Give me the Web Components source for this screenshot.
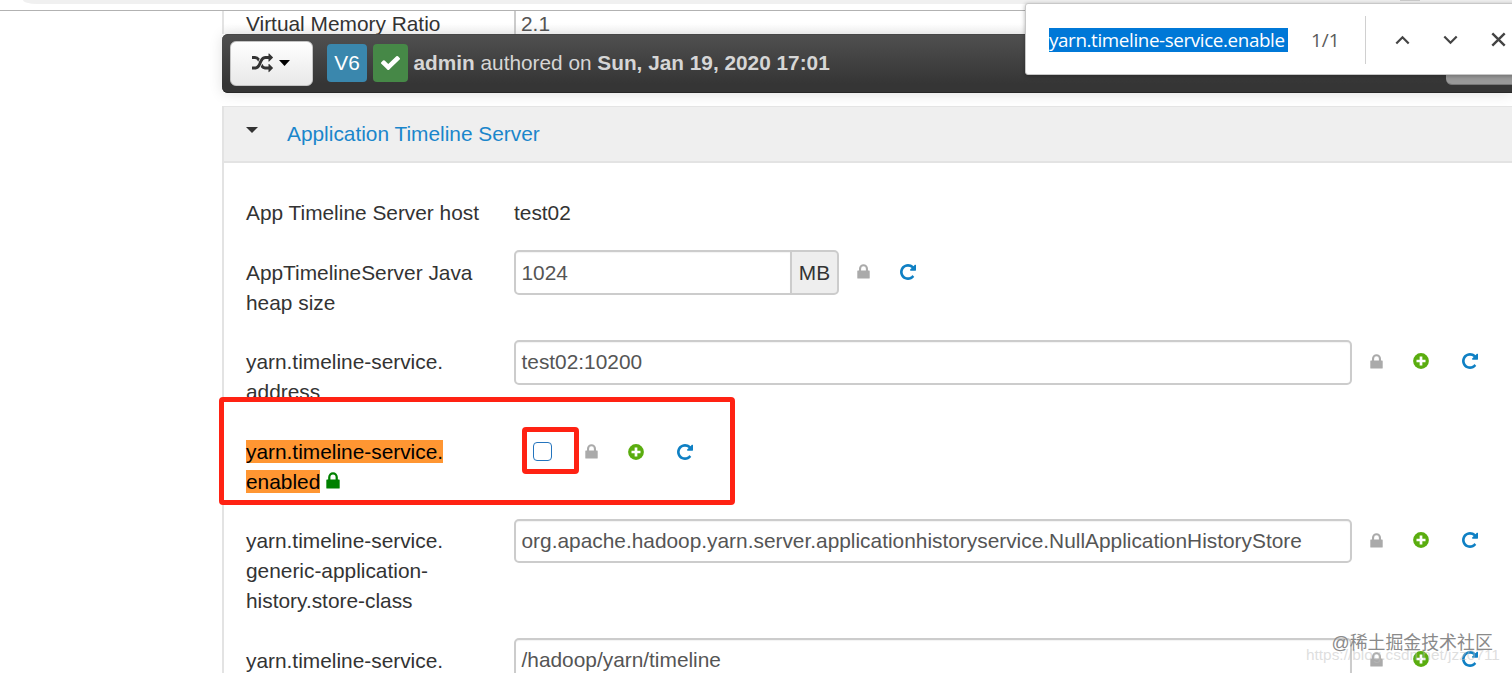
<!DOCTYPE html>
<html lang="en">
<head>
<meta charset="UTF-8">
<title>YARN Configs</title>
<style>
    body {
        margin: 0;
        width: 1512px;
        height: 673px;
        overflow: hidden;
        position: relative;
        background: #fff;
        color: #333;
        font: 20.87px/29.83px "Liberation Sans", Arial, sans-serif;
    }
    mark {
        background: #ff9632;
        color: #000;
    }
    .big {
        left: 218.5px;
        top: 397.3px;
        width: 516.5px;
        height: 107.5px;
    }
    .small {
        left: 522px;
        top: 427px;
        width: 57px;
        height: 47.3px;
    }
</style>
</head>
<body>
<browser-edge></browser-edge>
<config-peek value="2.1">Virtual Memory Ratio</config-peek>
<version-bar version="V6"><b>admin</b> authored on <b>Sun, Jan 19, 2020 17:01</b></version-bar>
<config-section>
    <span slot="title">Application Timeline Server</span>
    <config-row type="text" value="test02">App Timeline Server host</config-row>
    <config-row type="short" value="1024" unit="MB" icons="lock undo">AppTimelineServer Java<br>heap size</config-row>
    <config-row type="input" value="test02:10200" icons="lock plus undo">yarn.timeline-service.<br>address</config-row>
    <config-row type="check" icons="lock plus undo"><mark>yarn.timeline-service.</mark><br><mark>enabled</mark> <ui-icon name="lock" style="color:#008000;--w:14px;--h:17px"></ui-icon></config-row>
    <config-row type="input" value="org.apache.hadoop.yarn.server.applicationhistoryservice.NullApplicationHistoryStore" icons="lock plus undo">yarn.timeline-service.<br>generic-application-<br>history.store-class</config-row>
    <config-row type="input" value="/hadoop/yarn/timeline" icons="lock plus undo">yarn.timeline-service.</config-row>
</config-section>
<find-bar count="1/1">yarn.timeline-service.enable</find-bar>
<red-box class="big"></red-box>
<red-box class="small"></red-box>
<water-mark><span slot="url">https://blog.csdn.net/jzz0711</span>@稀土掘金技术社区</water-mark>

<script>
const ICONS = {
    lock: ['0 0 13 15', '<path fill="currentColor" fill-rule="evenodd" d="M.9 6.6H2V4.7a4.5 4.5 0 0 1 9 0v1.9h1.100q.6 0 .6.6v6.900q0 .5-.6.5H.9q-.6 0-.6-.5V7.200q0-.6.6-.6zM4.100 6.600h4.800V4.700a2.400 2.400 0 0 0-4.800 0z"/>'],
    plus: ['0 0 16 16', '<circle cx="8" cy="8" r="7.900" fill="currentColor"/><path stroke="#fff" stroke-width="2.700" d="M8 3.500v9M3.500 8h9"/>'],
    undo: ['128 128 1536 1536', '<path fill="currentColor" d="M1664 256v448q0 26-19 45t-45 19h-448q-42 0-59-40-17-39 14-69l138-138q-148-137-349-137-104 0-198.500 40.500t-163.500 109.500-109.500 163.500-40.500 198.500 40.500 198.500 109.500 163.500 163.500 109.500 198.500 40.500q119 0 225-52t179-147q7-10 23-12 15 0 25 9l137 138q9 8 9.500 20.500t-7.500 22.500q-109 132-264 204.500t-327 72.500q-156 0-298-61t-245-164-164-245-61-298 61-298 164-245 245-164 298-61q147 0 284.500 55.500t244.500 156.500l130-129q29-31 70-14 39 17 39 59z"/>'],
    random: ['0 0 1792 1792', '<path fill="currentColor" d="M666 481q-60 92-137 273-22-45-37-72.500t-40.500-63.500-51-56.500-63-35-81.500-14.500h-224q-14 0-23-9t-9-23v-192q0-14 9-23t23-9h224q250 0 410 225zm1126 799q0 14-9 23l-320 320q-9 9-23 9-13 0-22.500-9.500t-9.500-22.500v-192q-32 0-85 .5t-81 1-73-1-71-5-64-10.500-63-18.500-58-28.500-59-40-55-53.500-56-69.500q59-93 136-273 22 45 37 72.500t40.500 63.500 51 56.500 63 35 81.500 14.500h256v-192q0-14 9-23t23-9q12 0 24 10l319 319q9 9 9 23zm0-896q0 14-9 23l-320 320q-9 9-23 9-13 0-22.500-9.500t-9.500-22.500v-192h-256q-48 0-87 15t-69 45-51 61.500-45 77.500q-32 62-78 171-29 66-49.500 111t-54 105-64 100-74 83-90 68.500-106.500 42-128 16.500h-224q-14 0-23-9t-9-23v-192q0-14 9-23t23-9h224q48 0 87-15t69-45 51-61.500 45-77.500q32-62 78-171 29-66 49.500-111t54-105 64-100 74-83 90-68.500 106.500-42 128-16.500h256v-192q0-14 9-23t23-9q12 0 24 10l319 319q9 9 9 23z"/>'],
    check: ['121 334 1550 1188', '<path fill="currentColor" d="M1671 566q0 40-28 68l-724 724-136 136q-28 28-68 28t-68-28l-136-136-362-362q-28-28-28-68t28-68l136-136q28-28 68-28t68 28l294 295 656-657q28-28 68-28t68 28l136 136q28 28 28 68z"/>'],
    up: ['0 0 15 10', '<path fill="none" stroke="currentColor" stroke-width="2.200" d="M1.300 8.500 7.500 2.300l6.200 6.200"/>'],
    down: ['0 0 15 10', '<path fill="none" stroke="currentColor" stroke-width="2.200" d="M1.300 1.500 7.500 7.700l6.200-6.200"/>'],
    close: ['0 0 15 15', '<path fill="none" stroke="currentColor" stroke-width="2.400" d="M1.300 1.300l12.400 12.400M13.700 1.300 1.300 13.700"/>'],
    caret: ['0 0 12 6', '<path fill="currentColor" d="M0 0h12L6 6z"/>']
};

class Base extends HTMLElement{
    constructor(){
        super();
        this.attachShadow({mode: "open"});
    }
    connectedCallback(){
        const template = document.createElement("template");
        template.innerHTML = `<style>${this.getStyle()}</style>${this.getTemplate()}`;
        this.shadowRoot.replaceChildren(template.content.cloneNode(true));
    }
    getTemplate(){
        return "";
    }
}

class UiIcon extends Base{
    getStyle(){
        return `
        :host { display: inline-block; width: var(--w, 16px); height: var(--h, 16px); line-height: 0; flex: none; }
        svg { display: block; width: 100%; height: 100%; }`;
    }
    getTemplate(){
        const [box, shape] = ICONS[this.getAttribute("name")];
        return `<svg viewBox="${box}" preserveAspectRatio="none">${shape}</svg>`;
    }
}

class BrowserEdge extends Base{
    getStyle(){
        return `
        :host { display: flex; justify-content: flex-end; box-sizing: border-box; height: 11px; border-bottom: 1px solid #b2b2b2; }
        div { width: 1489px; height: 4px; background: #f0f0f0; border-bottom-left-radius: 14px 4px; box-sizing: border-box; padding-left: 1377px; }
        i { display: block; width: 20px; height: 1px; background: #ccc; }`;
    }
    getTemplate(){
        return `<div><i></i></div>`;
    }
}

class ConfigPeek extends Base{
    getStyle(){
        return `
        :host { display: flex; height: 23px; margin-left: 222px; border-left: 2px solid #e3e3e3; overflow: hidden; background: linear-gradient(#fff 55%, #f6f6f6); }
        span { width: 290px; padding-left: 22px; box-sizing: border-box; margin-top: -2px; }
        div { flex: 1; border-left: 2px solid #ccc; padding-left: 5px; color: #555; }
        p { margin: -2px 0 0; }`;
    }
    getTemplate(){
        return `<span><slot></slot></span><div><p>${this.getAttribute("value")}</p></div>`;
    }
}

class VersionBar extends Base{
    getStyle(){
        return `
        :host { display: flex; align-items: center; box-sizing: border-box; height: 59px; margin-left: 222px; padding: 0 0 1px 8px;
            border-radius: 6px 0 0 6px; background: linear-gradient(#505050, #353535 85%); color: #d6d6d6; font-size: 20.800px;
            box-shadow: 0 1px 14px rgba(0, 0, 0, .12), inset 0 -1px #282828, inset 0 1px #474747; position: relative; }
        .menu { display: flex; align-items: center; gap: 6px; box-sizing: border-box; width: 83px; height: 45px; padding-left: 20.500px; margin-right: 14px;
            border: 1.5px solid #c4c4c4; border-radius: 6px; background: linear-gradient(#fff, #e8e8e8); color: #333; }
        .tag { display: flex; align-items: center; justify-content: center; height: 38px; border-radius: 4px; color: #fff; }
        .v { width: 40px; background: #3a87ad; margin-right: 6px; }
        .ok { width: 35px; background: #468847; margin-right: 5.500px; }
        .grey { align-self: flex-end; width: 66px; height: 12px; margin: 0 0 7px auto; border-radius: 0 0 0 6px; background: #999; border-bottom: 1px solid #777; }`;
    }
    getTemplate(){
        return `
        <div class="menu"><ui-icon name="random" style="--w:21px;--h:21px"></ui-icon><ui-icon name="caret" style="color:#000;--w:11px;--h:6px"></ui-icon></div>
        <div class="tag v">${this.getAttribute("version")}</div>
        <div class="tag ok"><ui-icon name="check" style="--w:19px;--h:14px"></ui-icon></div>
        <div><slot></slot></div>
        <div class="grey"></div>`;
    }
}

class ConfigSection extends Base{
    getStyle(){
        return `
        :host { display: block; margin: 13px 0 0 222px; border-left: 2px solid #e3e3e3; }
        header { display: flex; align-items: center; box-sizing: border-box; height: 57px; padding-left: 22px; gap: 29px;
            background: #efefef; border-top: 1px solid #e4e4e4; border-bottom: 2px solid #e3e3e3; color: #1a86cb; }
        header ui-icon { color: #333; --w: 12px; --h: 6px; margin-bottom: 8px; }
        main { padding: 27.800px 0 0 22px; }`;
    }
    getTemplate(){
        return `<header><ui-icon name="caret"></ui-icon><slot name="title"></slot></header><main><slot></slot></main>`;
    }
}

class ConfigRow extends Base{
    getStyle(){
        return `
        :host { display: flex; align-items: flex-start; margin-bottom: 22.300px; }
        .label { width: 268px; padding-top: 7.500px; white-space: nowrap; flex: none; }
        .text { padding-top: 7.500px; }
        .input { display: flex; align-items: center; box-sizing: border-box; width: 838px; height: 44.700px; padding-left: 5.500px;
            border: 2px solid #ccc; border-radius: 5px; color: #555; margin-bottom: -8px; box-shadow: inset 0 1px 1px rgba(0, 0, 0, .05); }
        .short { width: 278px; border-radius: 5px 0 0 5px; }
        .unit { display: flex; align-items: center; justify-content: center; box-sizing: border-box; width: 49px; height: 44.700px; margin-left: -2px;
            border: 2px solid #ccc; border-radius: 0 5px 5px 0; background: #eee; }
        .check { box-sizing: border-box; width: 19px; height: 19px; margin: 13px 15.500px 0 18.500px; border: 1.800px solid #2474bd; border-radius: 4px; }
        .icons { display: flex; align-items: center; height: 42.500px; margin-left: 18px; }
        .check + .icons { height: 45px; }
        .lock { --w: 13px; --h: 15px; color: #aaa; }
        .plus { color: #5aad0f; margin-left: 30px; }
        .undo { color: #0f80c4; margin-left: 33px; }
        .lock + .undo { margin-left: 30px; }`;
    }
    getTemplate(){
        const type = this.getAttribute("type");
        const value = this.getAttribute("value");
        const unit = this.getAttribute("unit");
        const names = (this.getAttribute("icons") || "").split(" ").filter(Boolean);
        let field = `<div class="input ${type}">${value}</div>`;
        if(type === "text") field = `<div class="text">${value}</div>`;
        if(type === "check") field = `<div class="check"></div>`;
        const icons = names.map(n => `<ui-icon class="${n}" name="${n}"></ui-icon>`).join("");
        return `
        <div class="label"><slot></slot></div>
        ${field}${unit ? `<div class="unit">${unit}</div>` : ""}
        ${icons ? `<div class="icons">${icons}</div>` : ""}`;
    }
}

class FindBar extends Base{
    getStyle(){
        return `
        :host { position: absolute; left: 1025px; top: 3px; width: 500px; height: 72px; box-sizing: border-box; display: flex; align-items: center;
            padding: 1px 0 0 23px; background: #fff; border: 1px solid #c8c8c8; border-radius: 3px; box-shadow: 0 1px 4px rgba(0, 0, 0, .3);
            font: 20px/24px "Open Sans", "Noto Sans", sans-serif; color: #5a5a5a; }
        .query { width: 239px; height: 24px; background: #0078d7; color: #fff; white-space: nowrap; font-size: 18.800px; letter-spacing: -.37px; flex: none; }
        .count { margin-left: 23px; width: 54px; font-size: 19px; flex: none; }
        .line { width: 1px; height: 48px; background: #d0d0d0; margin: 0 29px 0 0; flex: none; }
        ui-icon { --w: 15px; --h: 10px; color: #444; margin-right: 33px; }
        ui-icon[name=close] { --h: 15px; margin-right: 0; }`;
    }
    getTemplate(){
        return `<div class="query"><slot></slot></div><div class="count">${this.getAttribute("count")}</div><div class="line"></div>
        <ui-icon name="up"></ui-icon><ui-icon name="down"></ui-icon><ui-icon name="close"></ui-icon>`;
    }
}

class RedBox extends Base{
    getStyle(){
        return `:host { position: absolute; box-sizing: border-box; border: 5px solid #ff2213; border-radius: 4px; }`;
    }
}

class WaterMark extends Base{
    getStyle(){
        return `
        :host { position: absolute; left: 1306px; top: 632px; width: 206px; height: 40px; white-space: nowrap; }
        .main { position: absolute; left: 25.500px; top: 0; font: 17.900px/22px "Liberation Sans", "Noto Sans CJK SC", sans-serif; color: #8a8a8a; }
        .url { position: absolute; left: 0; top: 14px; font: 15.400px/18px "Liberation Sans", Arial, sans-serif; color: rgba(190, 190, 190, .5); }`;
    }
    getTemplate(){
        return `<div class="url"><slot name="url"></slot></div><div class="main"><slot></slot></div>`;
    }
}

customElements.define('ui-icon', UiIcon);
customElements.define('browser-edge', BrowserEdge);
customElements.define('config-peek', ConfigPeek);
customElements.define('version-bar', VersionBar);
customElements.define('config-section', ConfigSection);
customElements.define('config-row', ConfigRow);
customElements.define('find-bar', FindBar);
customElements.define('red-box', RedBox);
customElements.define('water-mark', WaterMark);
</script>
</body>
</html>
